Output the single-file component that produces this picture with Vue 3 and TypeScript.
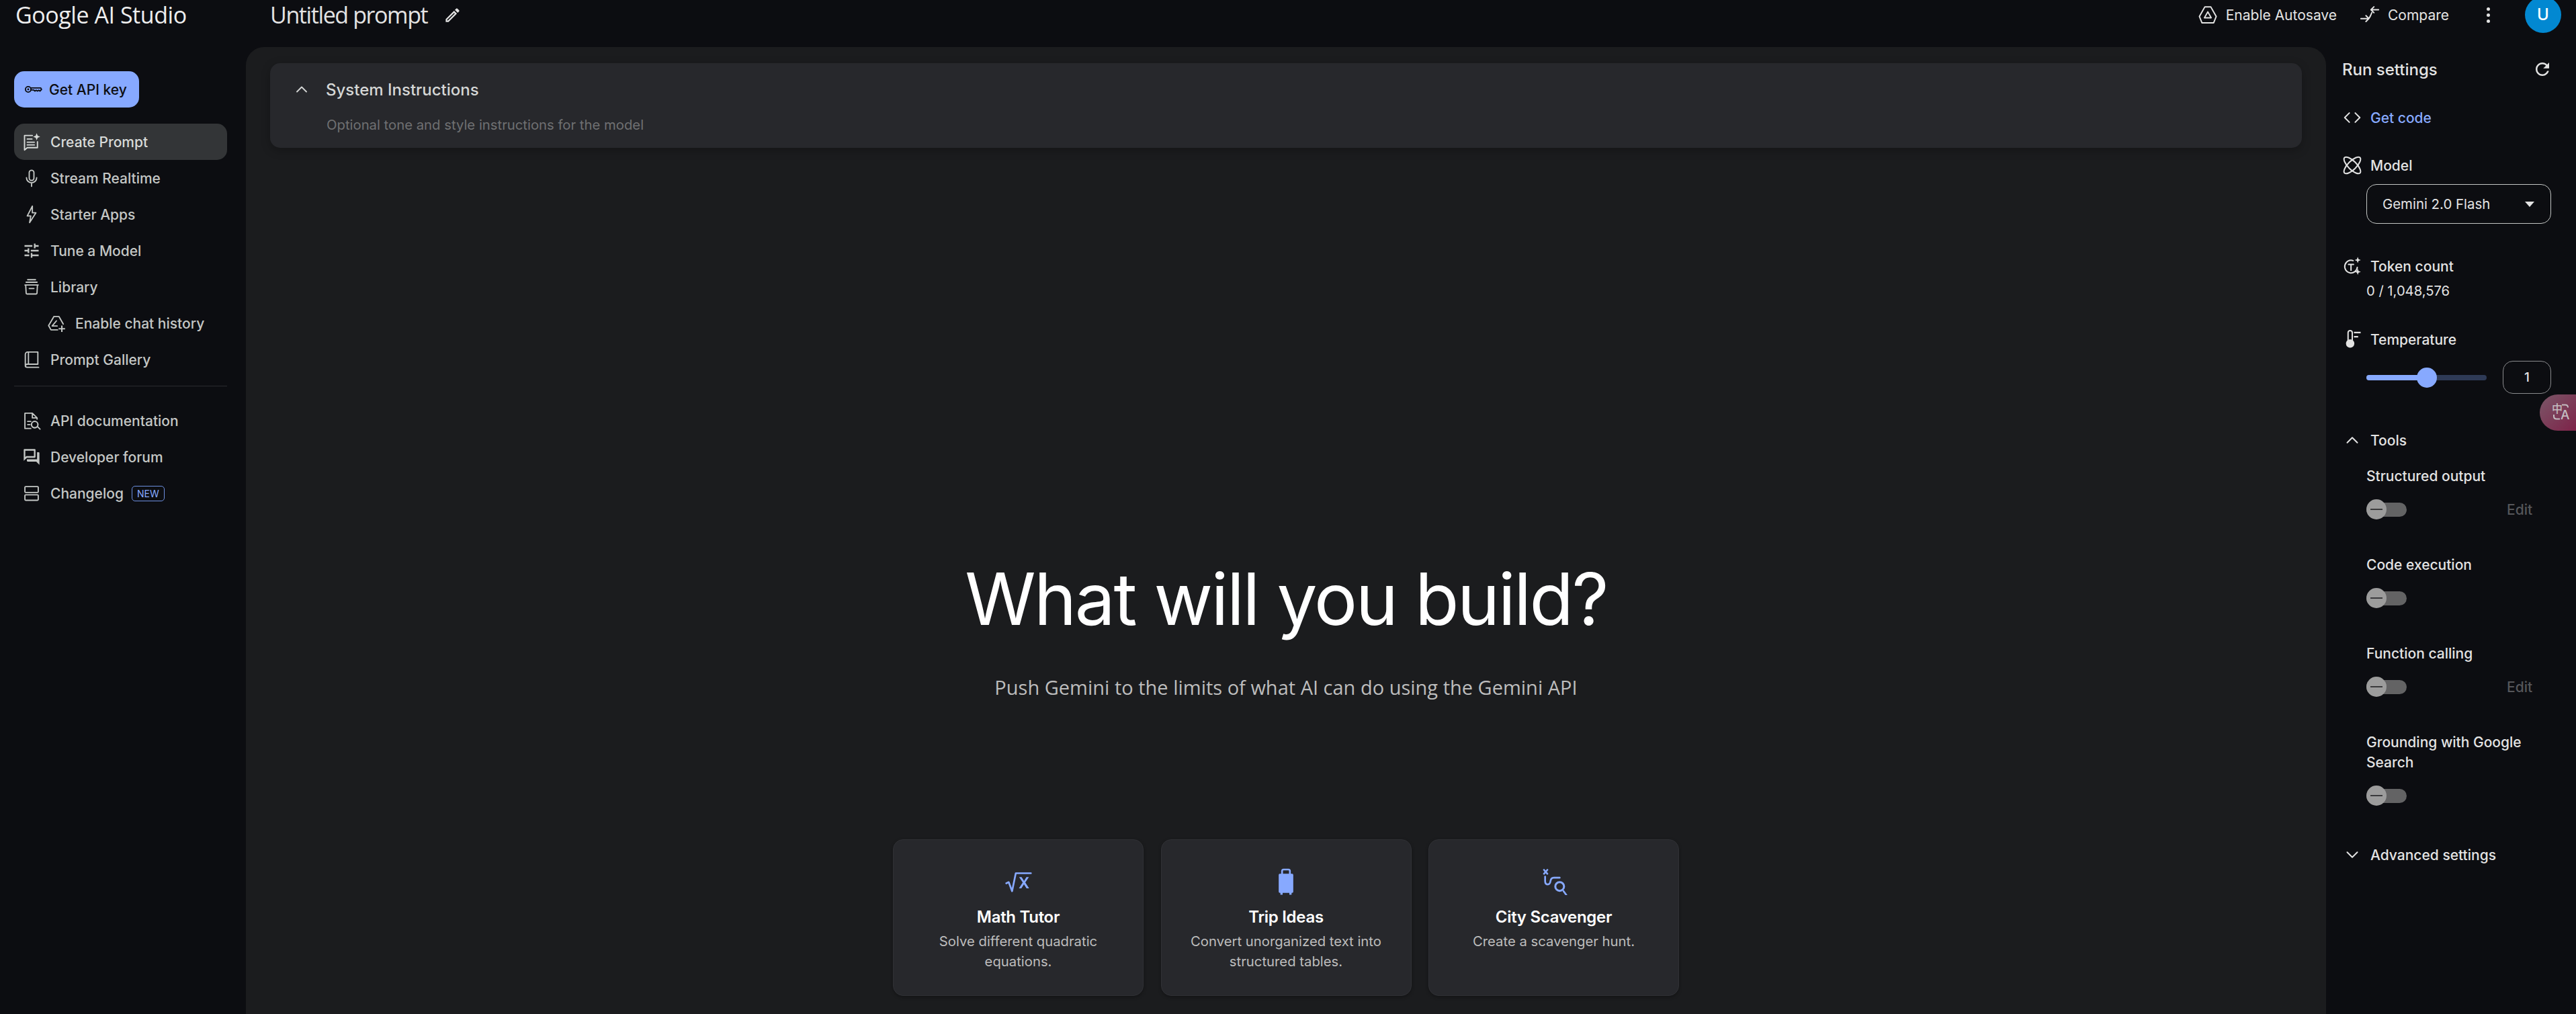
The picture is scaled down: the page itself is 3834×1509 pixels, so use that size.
<script setup lang="ts">
interface Glyph { s?: string; f?: string }

const icons: Record<string, Glyph> = {
  key: { s: 'M9.5 12a3.5 3.5 0 1 1-7 0 3.5 3.5 0 0 1 7 0Zm0-1.8H22l1 1.8-2 2.2-1.6-1.2-1.6 1.2-1.6-1.2-1.6 1.2-1.6-1.4H9.3', f: 'M6 10.8a1.2 1.2 0 1 0 0 2.4 1.2 1.2 0 0 0 0-2.4Z' },
  prompt: { s: 'M19.5 12v7.5H6.5L3 22.5V4h10M6.5 8.5h6M6.5 12.5h9M6.5 16h9', f: 'M18.5 1l1.3 3.2L23 5.5l-3.2 1.3L18.5 10l-1.3-3.2L14 5.5l3.2-1.3z' },
  mic: { s: 'M9 5a3 3 0 0 1 6 0v7a3 3 0 0 1-6 0zM5.5 11.5a6.5 6.5 0 0 0 13 0M12 18v4.5' },
  bolt: { s: 'M13 1.5 6.5 14H11l-1.5 8.5L17.5 10H13z' },
  tune: { f: 'M3 17v2h6v-2H3zM3 5v2h10V5H3zm10 16v-2h8v-2h-8v-2h-2v6h2zM7 9v2H3v2h4v2h2V9H7zm14 4v-2H11v2h10zm-6-4h2V7h4V5h-4V3h-2v6z' },
  library: { s: 'M7 2.8h10M5 6h14M3.5 9.5h17M4.5 9.5l.6 10.5c0 .6.4 1 1 1h11.8c.6 0 1-.4 1-1l.6-10.5M9 14h6' },
  addDrive: { s: 'M8.8 3.5h6.4l5.5 9.5M8.8 3.5 2 15l3 5.5h8.5M6.5 15.5h6.5M12 9l-5.5 6.5', f: 'M18 15h1.8v3.2H23V20h-3.2v3.2H18V20h-3.2v-1.8H18z' },
  book: { s: 'M20 2.5H7a3 3 0 0 0-3 3v14a2.5 2.5 0 0 0 2.5 2.5H21M20 2.5V18H6.5A2.5 2.5 0 0 0 4 20.5M8 2.5V18' },
  doc: { s: 'M11 22H3.5V2.5h9.5l6 6V10M13 2.5v6h6M7 13h4M7 17h3M19.8 19.8l3 3', f: 'M16 12a5 5 0 1 0 0 10 5 5 0 0 0 0-10Zm0 1.8a3.2 3.2 0 1 1 0 6.4 3.2 3.2 0 0 1 0-6.4Z' },
  forum: { f: 'M15 4v7H5.17L4 12.17V4h11m1-2H3c-.55 0-1 .45-1 1v14l4-4h10c.55 0 1-.45 1-1V3c0-.55-.45-1-1-1zm5 4h-2v9H6v2c0 .55.45 1 1 1h11l4 4V7c0-.55-.45-1-1-1z' },
  agenda: { s: 'M4.5 3.5h15a1 1 0 0 1 1 1v5.5a1 1 0 0 1-1 1h-15a1 1 0 0 1-1-1V4.5a1 1 0 0 1 1-1ZM4.5 14h15a1 1 0 0 1 1 1v5a1 1 0 0 1-1 1h-15a1 1 0 0 1-1-1v-5a1 1 0 0 1 1-1Z' },
  edit: { f: 'M3 17.25V21h3.75L17.81 9.94l-3.75-3.75L3 17.25zM5.92 19H5v-.92l9.06-9.06.92.92L5.92 19zM20.71 5.63l-2.34-2.34c-.2-.2-.45-.29-.71-.29s-.51.1-.7.29l-1.83 1.83 3.75 3.75 1.83-1.83c.39-.39.39-1.02 0-1.41z' },
  drive: { s: 'M8.5 2.5h7L22 14l-3 7.5H5L2 14zM12 8.5l4 7H8z' },
  compare: { s: 'M1.5 16.5h9M7.5 13l3.5 3.5L7.5 20M22.5 6H14M17 2.5 13.5 6 17 9.5M10.5 16.5c2-1 2.5-4 4-7' },
  refresh: { f: 'M17.65 6.35C16.2 4.9 14.21 4 12 4c-4.42 0-7.99 3.58-7.99 8s3.57 8 7.99 8c3.73 0 6.84-2.55 7.73-6h-2.08c-.82 2.33-3.04 4-5.65 4-3.31 0-6-2.69-6-6s2.69-6 6-6c1.66 0 3.14.69 4.22 1.78L13 11h7V4l-2.35 2.35z' },
  code: { s: 'M8.5 6.5 3 12l5.5 5.5M15.5 6.5 21 12l-5.5 5.5' },
  token: { s: 'M18 13.5a7.5 7.5 0 1 1-5-8M7.5 10h6M10.5 10v7', f: 'M18.5 1l1 2.7 2.7 1-2.7 1-1 2.7-1-2.7-2.7-1 2.7-1zM18.5 15l1 2.7 2.7 1-2.7 1-1 2.7-1-2.7-2.7-1 2.7-1z' },
  temp: { s: 'M7 14V4a2.5 2.5 0 0 1 5 0v10', f: 'M9.5 12a4.8 4.8 0 1 0 0 10 4.8 4.8 0 0 0 0-10ZM14 3h8v1.8h-8zM14 8h5v1.8h-5z' },
  up: { s: 'M6 15l6-6 6 6' },
  down: { s: 'M6 9l6 6 6-6' },
  math: { s: 'M1 13.5 3.2 12.5l3 8L9.5 4.5H23', f: 'M12.5 8h2.2l2.2 3.4L19 8h2.200l-3.200 4.800 3.400 5.200h-2.300l-2.300-3.600-2.300 3.600h-2.200l3.400-5.200z' },
  trip: { s: 'M8.5 5.5V2.500a1.300 1.300 0 0 1 1.300-1.300h4.400a1.300 1.300 0 0 1 1.300 1.300v3', f: 'M6.500 5h11a1 1 0 0 1 1 1v15a1 1 0 0 1-1 1h-11a1 1 0 0 1-1-1V6a1 1 0 0 1 1-1ZM7 22h2v1.700H7zM15 22h2v1.700h-2z' },
  city: { s: 'M4 7.500v4c0 2 1 3 2.500 3s2-1 2.300-3c.3-2 1.200-3 3-3H17M20.500 20.500l2.500 3.500M3 1.500l3 3.500M6 1.500 3 5', f: 'M17 11.500a4.800 4.800 0 1 0 0 9.600 4.800 4.800 0 0 0 0-9.600Zm0 1.800a3 3 0 1 1 0 6 3 3 0 0 1 0-6Z' },
}

const navTop = [
  { id: 'prompt', label: 'Create Prompt', active: true },
  { id: 'mic', label: 'Stream Realtime' },
  { id: 'bolt', label: 'Starter Apps' },
  { id: 'tune', label: 'Tune a Model' },
  { id: 'library', label: 'Library' },
  { id: 'addDrive', label: 'Enable chat history', sub: true },
  { id: 'book', label: 'Prompt Gallery' },
]
const navBottom = [
  { id: 'doc', label: 'API documentation' },
  { id: 'forum', label: 'Developer forum' },
  { id: 'agenda', label: 'Changelog', badge: 'NEW' },
]
const cards = [
  { id: 'math', title: 'Math Tutor', text: 'Solve different quadratic equations.' },
  { id: 'trip', title: 'Trip Ideas', text: 'Convert unorganized text into structured tables.' },
  { id: 'city', title: 'City Scavenger', text: 'Create a scavenger hunt.' },
]
const tools = [
  { label: 'Structured output', edit: true },
  { label: 'Code execution', edit: false },
  { label: 'Function calling', edit: true },
  { label: 'Grounding with Google Search', edit: false },
]
const sliderValue = 50
</script>

<template>
  <div class="shell">
    <header class="topbar">
      <div class="brand">Google AI Studio</div>
      <div class="title-wrap">
        <span class="title">Untitled prompt</span>
        <svg class="ic edit" viewBox="0 0 24 24"><path :d="icons.edit.f" /></svg>
      </div>
      <div class="actions">
        <span class="action">
          <svg class="ic" viewBox="0 0 24 24"><path class="st" :d="icons.drive.s" /></svg>
          Enable Autosave
        </span>
        <span class="action compare">
          <svg class="ic" viewBox="0 0 24 24"><path class="st" :d="icons.compare.s" /></svg>
          Compare
        </span>
        <span class="dots"><i></i><i></i><i></i></span>
        <span class="avatar">U</span>
      </div>
    </header>

    <aside class="sidebar">
      <button class="api-btn">
        <svg class="ic" viewBox="0 0 24 24"><path class="st" :d="icons.key.s" /><path :d="icons.key.f" /></svg>
        Get API key
      </button>
      <nav class="nav">
        <a v-for="n in navTop" :key="n.label" class="nav-item" :class="{ active: n.active, sub: n.sub }">
          <svg class="ic" viewBox="0 0 24 24">
            <path v-if="icons[n.id].s" class="st" :d="icons[n.id].s" />
            <path v-if="icons[n.id].f" :d="icons[n.id].f" />
          </svg>
          <span>{{ n.label }}</span>
        </a>
      </nav>
      <div class="divider"></div>
      <nav class="nav">
        <a v-for="n in navBottom" :key="n.label" class="nav-item">
          <svg class="ic" viewBox="0 0 24 24">
            <path v-if="icons[n.id].s" class="st" :d="icons[n.id].s" />
            <path v-if="icons[n.id].f" :d="icons[n.id].f" />
          </svg>
          <span>{{ n.label }}</span>
          <em v-if="n.badge" class="badge">{{ n.badge }}</em>
        </a>
      </nav>
    </aside>

    <main class="panel">
      <section class="sys-card">
        <div class="sys-head">
          <svg class="ic chev" viewBox="0 0 24 24"><path class="st" :d="icons.up.s" /></svg>
          <span>System Instructions</span>
        </div>
        <div class="sys-sub">Optional tone and style instructions for the model</div>
      </section>
      <section class="hero">
        <h1>What will you build?</h1>
        <p>Push Gemini to the limits of what AI can do using the Gemini API</p>
      </section>
      <section class="cards">
        <article v-for="c in cards" :key="c.id" class="card">
          <svg class="ic card-ic" viewBox="0 0 24 24">
            <path v-if="icons[c.id].s" class="st" :d="icons[c.id].s" />
            <path v-if="icons[c.id].f" :d="icons[c.id].f" />
          </svg>
          <h3>{{ c.title }}</h3>
          <p>{{ c.text }}</p>
        </article>
      </section>
    </main>

    <aside class="settings">
      <div class="set-head">
        <span>Run settings</span>
        <svg class="ic" viewBox="0 0 24 24"><path :d="icons.refresh.f" /></svg>
      </div>
      <div class="row getcode">
        <svg class="ic" viewBox="0 0 24 24"><path class="st" :d="icons.code.s" /></svg>
        <span>Get code</span>
      </div>
      <div class="row model">
        <svg class="ic" viewBox="0 0 24 24">
          <g class="st"><ellipse cx="12" cy="12" rx="5" ry="13" transform="rotate(45 12 12)" /><ellipse cx="12" cy="12" rx="5" ry="13" transform="rotate(-45 12 12)" /></g>
        </svg>
        <span>Model</span>
      </div>
      <div class="select">
        <span>Gemini 2.0 Flash</span>
        <i class="caret"></i>
      </div>
      <div class="row token">
        <svg class="ic" viewBox="0 0 24 24"><path class="st" :d="icons.token.s" /><path :d="icons.token.f" /></svg>
        <span>Token count</span>
      </div>
      <div class="token-val">0 / 1,048,576</div>
      <div class="row temp">
        <svg class="ic" viewBox="0 0 24 24"><path class="st" :d="icons.temp.s" /><path :d="icons.temp.f" /></svg>
        <span>Temperature</span>
      </div>
      <div class="temp-ctl">
        <div class="slider">
          <div class="fill" :style="{ width: sliderValue + '%' }"></div>
          <div class="thumb" :style="{ left: sliderValue + '%' }"></div>
        </div>
        <div class="num">1</div>
      </div>
      <div class="row tools-head">
        <svg class="ic" viewBox="0 0 24 24"><path class="st" :d="icons.up.s" /></svg>
        <span>Tools</span>
      </div>
      <div class="tool-list">
        <div v-for="t in tools" :key="t.label" class="tool">
          <div class="tool-label">{{ t.label }}</div>
          <div class="tool-ctl">
            <span class="toggle"><i class="knob"></i></span>
            <span v-if="t.edit" class="tool-edit">Edit</span>
          </div>
        </div>
      </div>
      <div class="row advanced">
        <svg class="ic" viewBox="0 0 24 24"><path class="st" :d="icons.down.s" /></svg>
        <span>Advanced settings</span>
      </div>
      <div class="translate">
        <svg class="tr-arcs" viewBox="0 0 54 54"><path d="M33 15.500h5c2.500 0 4 1.500 4 4M21 30v2.500c0 2.500 1.500 4 4 4h5" /></svg>
        <span class="tr-zh">中</span>
        <span class="tr-en">A</span>
      </div>
    </aside>
  </div>
</template>

<style>
html, body { margin: 0; background: #0c0d11; overflow: hidden; }
</style>

<style scoped>
.shell {
  position: relative;
  display: grid;
  grid-template-columns: 366px 1fr 372px;
  grid-template-rows: 70px 1fr;
  width: 3834px;
  height: 1509px;
  overflow: hidden;
  background: #0c0d11;
  color: #e3e3e3;
  font-family: Inter, "Noto Sans", sans-serif;
}
.ic { width: 30px; height: 30px; fill: currentColor; flex: none; }
.st { fill: none; stroke: currentColor; stroke-width: 1.6; stroke-linejoin: round; stroke-linecap: round; }

.topbar {
  grid-column: 1 / -1;
  display: flex;
  align-items: center;
  height: 44px;
}
.brand { width: 402px; padding-left: 23px; box-sizing: border-box; font-family: "Open Sans", sans-serif; font-size: 34px; color: #eee; letter-spacing: -.45px; white-space: nowrap; }
.title-wrap { display: flex; align-items: center; gap: 24px; }
.title { font-family: "Open Sans", sans-serif; font-size: 34px; color: #e3e3e3; letter-spacing: -1.4px; }
.edit { width: 27px; height: 27px; }
.actions { margin-left: auto; display: flex; align-items: center; font-size: 21px; color: #e3e3e3; padding-right: 22px; }
.action { display: flex; align-items: center; gap: 12px; }
.action:first-child { transform: translateX(2px); }
.compare { margin-left: 36px; }
.dots { display: flex; flex-direction: column; gap: 4px; margin: 0 52px 0 56px; }
.dots i { width: 5px; height: 5px; background: #e3e3e3; border-radius: 50%; }
.avatar { width: 54px; height: 54px; border-radius: 50%; background: #0288d1; color: #fff; display: flex; align-items: center; justify-content: center; font-size: 24px; font-weight: 500; margin-top: -1px; }

.sidebar { padding: 36px 28px 0 21px; }
.api-btn {
  display: flex; align-items: center; gap: 10px;
  width: 186px; height: 54px; padding: 0 0 0 14px; box-sizing: border-box;
  background: #87a9ff; border: 0; border-radius: 15px; color: #0c0d11;
  font: 500 21px Inter, sans-serif;
}
.api-btn .ic { width: 28px; height: 28px; }
.nav { display: flex; flex-direction: column; }
.sidebar > .nav:first-of-type { margin-top: 24px; }
.nav-item { display: flex; align-items: center; height: 54px; padding-left: 12px; gap: 14px; border-radius: 15px; color: #c4c7c5; font-size: 21px; font-weight: 500; white-space: nowrap; }
.nav-item .ic { width: 28px; height: 28px; }
.nav-item.active { background: #333537; color: #d8dbd9; }
.nav-item.sub { padding-left: 49px; }
.badge { font-style: normal; font-weight: 400; font-size: 14px; color: #87a9ff; border: 1px solid #6c8fe0; border-radius: 5px; padding: 2px 7px; margin-left: -2px; }
.divider { height: 1px; background: #2a2c30; margin: 12px 0 24px; }

.panel { display: flex; flex-direction: column; align-items: center; background: #1b1c1e; border-radius: 27px 27px 0 0; }
.sys-card { align-self: stretch; margin: 24px 36px 0; height: 126px; background: #27282c; border-radius: 15px; box-shadow: 0 4px 14px rgba(0,0,0,.25); box-sizing: border-box; padding: 18px 0 0 33px; }
.sys-head { display: flex; align-items: center; gap: 22px; height: 42px; font-size: 24px; font-weight: 500; color: #d5d7d6; }
.chev { width: 28px; height: 28px; }
.sys-sub { margin: 19px 0 0 51px; font-size: 20.3px; color: #6f7072; }
.hero { text-align: center; margin-top: 605px; }
.hero h1 { margin: 0; font-family: Inter, sans-serif; font-weight: 400; font-size: 107px; line-height: 132px; color: #fff; letter-spacing: -2.5px; white-space: nowrap; }
.hero p { margin: 44px 0 0; font-family: "Open Sans", sans-serif; font-size: 29px; line-height: 44px; color: #bdbdbd; }
.cards { display: flex; gap: 25.5px; margin-top: 204px; }
.card { width: 373px; height: 233px; box-sizing: border-box; padding: 42px 30px 0; background: #27282c; border: 1px solid #303135; border-radius: 15px; text-align: center; box-shadow: 0 2px 5px rgba(0,0,0,.3); }
.card-ic { display: block; width: 40px; height: 40px; margin: 0 auto; color: #87a9ff; }
.card h3 { margin: 18px 0 0; font-size: 24px; line-height: 30px; font-weight: 600; color: #fff; letter-spacing: -.3px; }
.card p { margin: 6px 0 0; font-size: 20.3px; line-height: 30px; color: #bdbdbd; }

.settings { padding: 11px 37px 0 24px; font-size: 21px; }
.set-head { display: flex; justify-content: space-between; align-items: center; height: 44px; font-size: 24px; font-weight: 500; color: #e3e3e3; margin-right: -2px; }
.row { display: flex; align-items: center; gap: 12px; height: 44px; font-weight: 500; color: #e3e3e3; white-space: nowrap; }
.getcode { margin-top: 28px; }
.getcode span { color: #87a9ff; }
.model { margin-top: 27px; }
.select { display: flex; justify-content: space-between; align-items: center; height: 59px; box-sizing: border-box; margin: 6px 0 0 36px; padding: 0 24px 0 23px; border: 1.5px solid #c4c7c5; border-radius: 15px; color: #e3e3e3; font-size: 20.4px; }
.caret { width: 0; height: 0; border: 7px solid transparent; border-top: 8px solid #e3e3e3; border-bottom: 0; }
.token { margin-top: 41px; }
.token-val { margin: 0 0 0 36px; line-height: 30px; color: #e3e3e3; font-size: 20.2px; }
.temp { margin-top: 35px; }
.temp-ctl { display: flex; justify-content: space-between; align-items: center; margin: 10px 0 0 36px; height: 49px; }
.slider { position: relative; width: 179px; height: 8px; background: #2e3a56; border-radius: 4px; }
.fill { height: 100%; background: #87a9ff; border-radius: 4px; }
.thumb { position: absolute; top: 50%; width: 30px; height: 30px; border-radius: 50%; background: #87a9ff; transform: translate(-50%, -50%); }
.num { width: 72px; height: 49px; box-sizing: border-box; display: flex; align-items: center; justify-content: center; border: 1px solid #8a8b8d; border-radius: 15px; color: #e3e3e3; font-weight: 500; font-size: 19px; }
.tools-head { margin-top: 47px; }
.tool-list { margin-left: 36px; margin-top: 17px; display: flex; flex-direction: column; gap: 53px; }
.tool-label { line-height: 30px; font-weight: 500; color: #e3e3e3; width: 250px; }
.tool-ctl { display: flex; align-items: center; margin-top: 19px; height: 30px; }
.toggle { position: relative; display: block; width: 60px; height: 21px; background: #636364; border-radius: 11px; }
.knob { position: absolute; left: 0; top: -4.5px; width: 30px; height: 30px; border-radius: 50%; background: #9c9c9c; }
.knob::after { content: ""; position: absolute; left: 6px; right: 6px; top: 14px; height: 2px; background: #3a3a3c; }
.tool-edit { margin-left: 149px; color: #55565a; font-weight: 500; }
.advanced { margin-top: 51px; }
.translate { position: absolute; right: 0; top: 587px; width: 54px; height: 54px; border-radius: 27px 0 0 27px; background: linear-gradient(135deg, #7a5768, #7e2349); color: #c3bcc0; }
.tr-arcs { position: absolute; inset: 0; width: 54px; height: 54px; fill: none; stroke: #c3bcc0; stroke-width: 2; }
.tr-zh { position: absolute; left: 18px; top: 11px; font: 500 16px/18px "Noto Sans CJK SC", sans-serif; }
.tr-en { position: absolute; left: 31px; top: 21px; font: 500 19px/20px Inter, sans-serif; }
</style>
